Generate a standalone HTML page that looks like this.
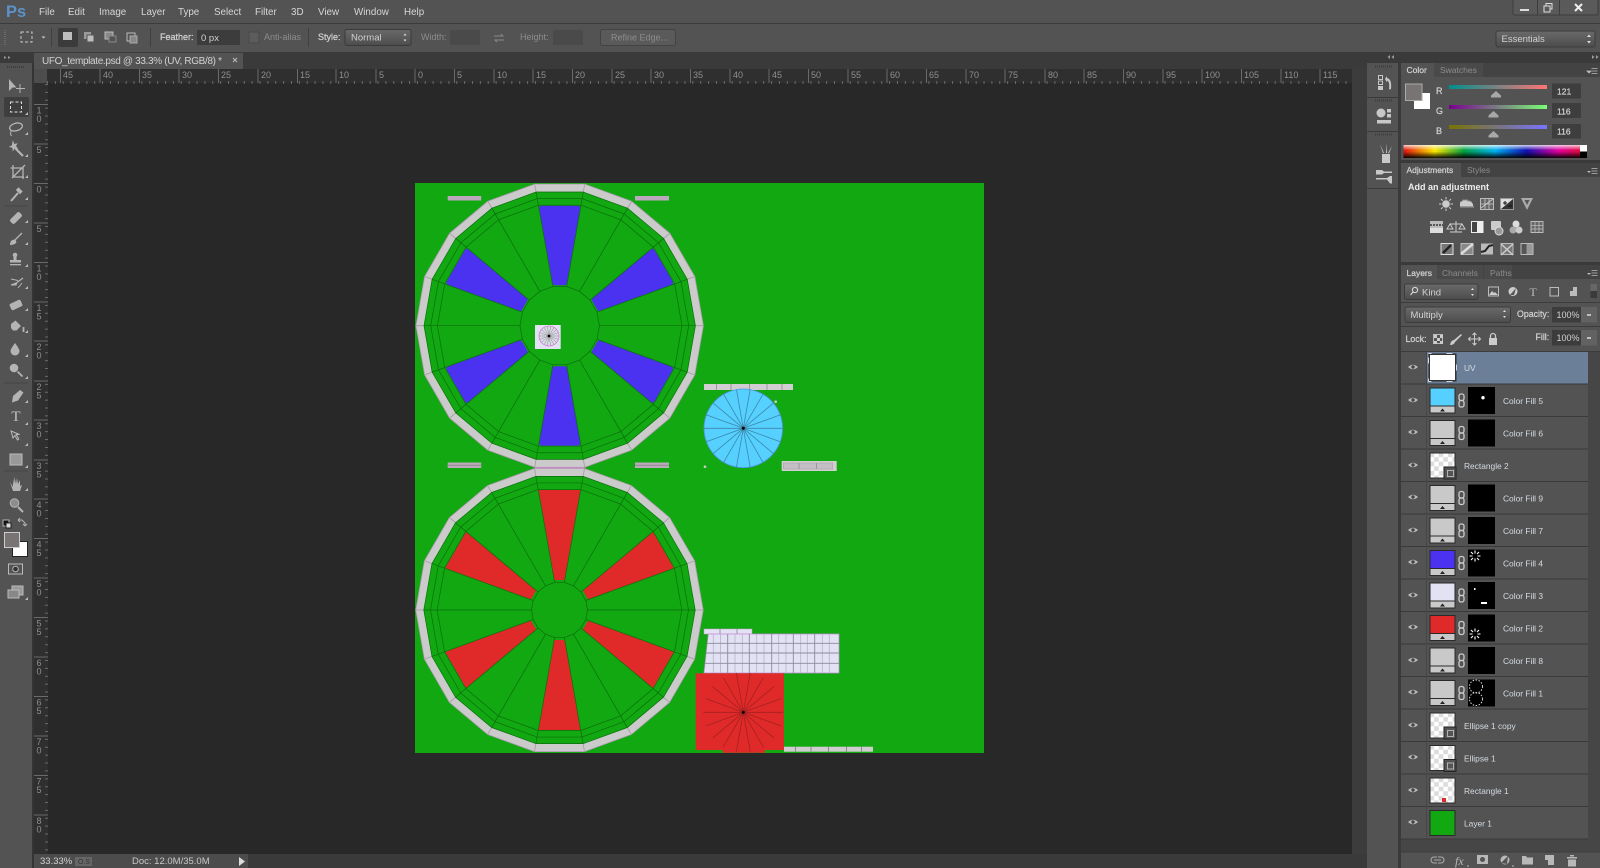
<!DOCTYPE html>
<html><head><meta charset="utf-8"><title>Photoshop</title>
<style>
html,body{margin:0;padding:0;background:#535353;width:1600px;height:868px;overflow:hidden}
svg{display:block;position:absolute;left:0;top:0;filter:blur(.35px)}
text{font-family:"Liberation Sans",sans-serif;font-size:9.5px;fill:#d2d2d2}
.d{fill:#8c8c8c}.b{stroke:#d2d2d2;stroke-width:.22px}.bb{font-weight:bold}
.r text{fill:#8f8f8f;font-size:9px}
.m text{font-size:9.8px;fill:#d6d6d6}
.l text{font-size:8.4px;fill:#d4dbe2}
</style></head><body>
<svg width="1600" height="868" viewBox="0 0 1600 868" xmlns="http://www.w3.org/2000/svg">
<defs>
<polygon id="p" points="174,-985 500,-866 766,-643 940,-342 1000,0 940,342 766,643 500,866 174,985 -174,985 -500,866 -766,643 -940,342 -1000,0 -940,-342 -766,-643 -500,-866 -174,-985"/>
<path id="sp" d="M0 0L174-985M0 0L500-866M0 0L766-643M0 0L940-342M0 0L1000 0M0 0L940 342M0 0L766 643M0 0L500 866M0 0L174 985M0 0L-174 985M0 0L-500 866M0 0L-766 643M0 0L-940 342M0 0L-1000 0M0 0L-940-342M0 0L-766-643M0 0L-500-866M0 0L-174-985"/>
<linearGradient id="gr"><stop offset="0" stop-color="#008f8f"/><stop offset="1" stop-color="#ff7474"/></linearGradient>
<linearGradient id="gg"><stop offset="0" stop-color="#790090"/><stop offset="1" stop-color="#79ff74"/></linearGradient>
<linearGradient id="gb"><stop offset="0" stop-color="#797400"/><stop offset="1" stop-color="#7974ff"/></linearGradient>
<linearGradient id="sx"><stop offset="0" stop-color="#e01010"/><stop offset=".17" stop-color="#ffe800"/><stop offset=".33" stop-color="#00a040"/><stop offset=".5" stop-color="#00b0f0"/><stop offset=".67" stop-color="#1010b0"/><stop offset=".84" stop-color="#e000a0"/><stop offset="1" stop-color="#e01020"/></linearGradient>
<linearGradient id="sy" x2="0" y2="1"><stop offset="0" stop-color="#fff" stop-opacity=".8"/><stop offset=".4" stop-color="#fff" stop-opacity="0"/><stop offset=".5" stop-color="#000" stop-opacity="0"/><stop offset="1" stop-color="#000" stop-opacity=".95"/></linearGradient>
<linearGradient id="bt" x2="0" y2="1"><stop offset="0" stop-color="#6a6a6a"/><stop offset="1" stop-color="#4c4c4c"/></linearGradient>
<pattern id="ck" width="9.2" height="9.2" patternUnits="userSpaceOnUse"><rect width="9.2" height="9.2" fill="#fff"/><rect width="4.6" height="4.6" fill="#dcdcdc"/><rect x="4.6" y="4.6" width="4.6" height="4.6" fill="#dcdcdc"/></pattern>
<g id="tf"><rect width="26" height="26" fill="#2a2a2a"/><rect x="1" y="1" width="24" height="17"/><rect x="1" y="19" width="24" height="6" fill="#c9c9c9"/><path d="M10.5 24h5l-2.500-3z" fill="#222"/></g>
<g id="tc"><rect width="26" height="26" fill="#2a2a2a"/><rect x="1" y="1" width="24" height="24" fill="url(#ck)"/></g>
<g id="ts"><rect x="14.500" y="14.500" width="12" height="12" fill="#535353" stroke="#222"/><rect x="18" y="18" width="6" height="6" fill="none" stroke="#c8c8c8" stroke-width=".8"/><path d="M18 18h.1M24 18h.1M18 24h.1M24 24h.1" stroke="#e8e8e8" stroke-width="2"/></g>
<g id="eye"><path d="M-5 0Q0-4.500 5 0Q0 4.500-5 0Z" fill="#bbb"/><circle r="1.700" fill="#444"/></g>
<g id="lk"><rect x="-2.500" y="-6.500" width="5" height="6.500" rx="2" fill="none" stroke="#ccc" stroke-width="1.300"/><rect x="-2.500" y="0" width="5" height="6.500" rx="2" fill="none" stroke="#ccc" stroke-width="1.300"/></g>
<rect id="mk" width="27" height="27" fill="#000"/>
<g id="st" stroke="#fff" stroke-width="1.100"><path d="M0-2.500v-3M0 2.500v3M-2.500 0h-3M2.500 0h3M-2-2l-2-2M2-2l2-2M-2 2l-2 2M2 2l2 2"/></g>
<path id="cn" d="M0 0h3v-3z" fill="#bbb"/>
<polygon id="bw" points="-18.200,-117.500 18.200,-117.500 5,-43 -5,-43"/>
<polygon id="rw" points="-21,-120 21,-120 5.300,-30 -5.300,-30"/>
</defs>

<!-- base -->
<rect width="1600" height="868" fill="#535353"/>
<rect y="23" width="1600" height="1" fill="#3b3b3b"/>
<rect y="52" width="1600" height="11" fill="#3a3a3a"/>

<!-- canvas area -->
<rect x="32" y="52" width="1335" height="816" fill="#3a3a3a"/>
<rect x="34" y="69" width="1318" height="14" fill="#2f2f2f"/>
<rect x="34" y="83" width="14" height="771" fill="#2f2f2f"/>
<rect x="34" y="69" width="13" height="14" fill="#4d4d4d"/>
<rect x="48" y="83" width="1304" height="771" fill="#282828"/>
<rect x="1352" y="69" width="15" height="785" fill="#3c3c3c"/>
<rect x="34" y="53" width="209" height="16" fill="#535353"/>
<text x="42" y="64" style="font-size:10px" textLength="180">UFO_template.psd @ 33.3% (UV, RGB/8) *</text>
<path d="M233 58l4 4M237 58l-4 4" stroke="#bbb" stroke-width="1"/>

<!-- rulers -->
<g stroke="#6a6a6a" fill="none">
<line x1="47" y1="82.500" x2="1352" y2="82.500" stroke-dasharray="1 6.870" stroke-width="3"/>
<line x1="60.500" y1="69" x2="60.500" y2="83"/><line x1="100" y1="69" x2="100" y2="83"/><line x1="139.500" y1="69" x2="139.500" y2="83"/><line x1="179" y1="69" x2="179" y2="83"/><line x1="218.500" y1="69" x2="218.500" y2="83"/><line x1="258" y1="69" x2="258" y2="83"/><line x1="297.500" y1="69" x2="297.500" y2="83"/><line x1="336" y1="69" x2="336" y2="83"/><line x1="376" y1="69" x2="376" y2="83"/><line x1="415" y1="69" x2="415" y2="83"/><line x1="454.500" y1="69" x2="454.500" y2="83"/><line x1="494" y1="69" x2="494" y2="83"/><line x1="533" y1="69" x2="533" y2="83"/><line x1="572.500" y1="69" x2="572.500" y2="83"/><line x1="612" y1="69" x2="612" y2="83"/><line x1="651" y1="69" x2="651" y2="83"/><line x1="690.500" y1="69" x2="690.500" y2="83"/><line x1="730" y1="69" x2="730" y2="83"/><line x1="769" y1="69" x2="769" y2="83"/><line x1="808.500" y1="69" x2="808.500" y2="83"/><line x1="848" y1="69" x2="848" y2="83"/><line x1="887" y1="69" x2="887" y2="83"/><line x1="926.500" y1="69" x2="926.500" y2="83"/><line x1="966" y1="69" x2="966" y2="83"/><line x1="1005" y1="69" x2="1005" y2="83"/><line x1="1045" y1="69" x2="1045" y2="83"/><line x1="1084" y1="69" x2="1084" y2="83"/><line x1="1123.500" y1="69" x2="1123.500" y2="83"/><line x1="1163" y1="69" x2="1163" y2="83"/><line x1="1202" y1="69" x2="1202" y2="83"/><line x1="1241.500" y1="69" x2="1241.500" y2="83"/><line x1="1281" y1="69" x2="1281" y2="83"/><line x1="1320" y1="69" x2="1320" y2="83"/>
<line x1="46.500" y1="84" x2="46.500" y2="854" stroke-dasharray="1 6.890" stroke-width="3"/>
<path d="M34 104.500h14M34 144h14M34 183.500h14M34 223h14M34 262.500h14M34 302h14M34 341h14M34 381h14M34 420h14M34 460h14M34 499h14M34 538.500h14M34 578h14M34 617.500h14M34 657h14M34 696.500h14M34 736h14M34 775.500h14M34 815h14"/>
</g>
<g class="r">
<text x="63" y="78">45</text><text x="103" y="78">40</text><text x="142" y="78">35</text><text x="182" y="78">30</text><text x="221" y="78">25</text><text x="261" y="78">20</text><text x="300" y="78">15</text><text x="339" y="78">10</text><text x="379" y="78">5</text><text x="418" y="78">0</text><text x="457" y="78">5</text><text x="497" y="78">10</text><text x="536" y="78">15</text><text x="575" y="78">20</text><text x="615" y="78">25</text><text x="654" y="78">30</text><text x="693" y="78">35</text><text x="733" y="78">40</text><text x="772" y="78">45</text><text x="811" y="78">50</text><text x="851" y="78">55</text><text x="890" y="78">60</text><text x="929" y="78">65</text><text x="969" y="78">70</text><text x="1008" y="78">75</text><text x="1048" y="78">80</text><text x="1087" y="78">85</text><text x="1126" y="78">90</text><text x="1166" y="78">95</text><text x="1205" y="78">100</text><text x="1244" y="78">105</text><text x="1284" y="78">110</text><text x="1323" y="78">115</text>
</g>
<g class="r" text-anchor="middle">
<text x="39" y="113.500">1</text><text x="39" y="122">0</text>
<text x="39" y="153">5</text>
<text x="39" y="192.500">0</text>
<text x="39" y="232">5</text>
<text x="39" y="271.500">1</text><text x="39" y="280">0</text>
<text x="39" y="311">1</text><text x="39" y="319.500">5</text>
<text x="39" y="350">2</text><text x="39" y="358.500">0</text>
<text x="39" y="390">2</text><text x="39" y="398.500">5</text>
<text x="39" y="429">3</text><text x="39" y="437.500">0</text>
<text x="39" y="469">3</text><text x="39" y="477.500">5</text>
<text x="39" y="508">4</text><text x="39" y="516.500">0</text>
<text x="39" y="547.500">4</text><text x="39" y="556">5</text>
<text x="39" y="587">5</text><text x="39" y="595.500">0</text>
<text x="39" y="626.500">5</text><text x="39" y="635">5</text>
<text x="39" y="666">6</text><text x="39" y="674.500">0</text>
<text x="39" y="705.500">6</text><text x="39" y="714">5</text>
<text x="39" y="745">7</text><text x="39" y="753.500">0</text>
<text x="39" y="784.500">7</text><text x="39" y="793">5</text>
<text x="39" y="824">8</text><text x="39" y="832.500">0</text>
</g>

<!-- status bar -->
<rect x="34" y="854" width="214" height="14" fill="#4c4c4c"/>
<text x="40" y="864">33.33%</text>
<rect x="75" y="857" width="17" height="9" fill="#666"/><text x="78" y="864" style="font-size:7px;fill:#333">O.S</text>
<text x="132" y="864" style="fill:#c8c8c8">Doc: 12.0M/35.0M</text>
<path d="M239 857l6 4.500-6 4.500z" fill="#ddd"/>

<!-- document -->
<rect x="415" y="183" width="569" height="570" fill="#11a811"/>

<!-- wheel 2 -->
<g transform="translate(559.500,610)">
<use href="#p" transform="scale(.1437)" fill="#cbcbcb" stroke="#b69ab6" stroke-width="5.600"/>
<use href="#sp" transform="scale(.1437)" fill="none" stroke="#a59aa5" stroke-width="5.600"/>
<use href="#p" transform="scale(.1357)" fill="#11a811" stroke="#0c6e0c" stroke-width="5.200"/>
<g fill="#e02a2a"><use href="#rw"/><use href="#rw" transform="rotate(60)"/><use href="#rw" transform="rotate(120)"/><use href="#rw" transform="rotate(180)"/><use href="#rw" transform="rotate(240)"/><use href="#rw" transform="rotate(300)"/></g>
<use href="#p" transform="scale(.129)" fill="none" stroke="#0c6e0c" stroke-width="5.400"/>
<use href="#p" transform="scale(.1223)" fill="none" stroke="#0c6e0c" stroke-width="5.700"/>
<use href="#sp" transform="scale(.1357)" fill="none" stroke="#0c6e0c" stroke-width="5.200"/>
<use href="#p" transform="scale(.028)" fill="#11a811" stroke="#0c6e0c" stroke-width="25"/>
</g>
<!-- wheel 1 -->
<g transform="translate(559.700,325.700)">
<use href="#p" transform="scale(.1437)" fill="#cbcbcb" stroke="#b69ab6" stroke-width="5.600"/>
<use href="#sp" transform="scale(.1437)" fill="none" stroke="#a59aa5" stroke-width="5.600"/>
<use href="#p" transform="scale(.1357)" fill="#11a811" stroke="#0c6e0c" stroke-width="5.200"/>
<g fill="#4b32f0" stroke="#4b32f0" stroke-width="5" stroke-linejoin="round"><use href="#bw"/><use href="#bw" transform="rotate(60)"/><use href="#bw" transform="rotate(120)"/><use href="#bw" transform="rotate(180)"/><use href="#bw" transform="rotate(240)"/><use href="#bw" transform="rotate(300)"/></g>
<use href="#p" transform="scale(.129)" fill="none" stroke="#0c6e0c" stroke-width="5.400"/>
<use href="#p" transform="scale(.1223)" fill="none" stroke="#0c6e0c" stroke-width="5.700"/>
<use href="#sp" transform="scale(.1357)" fill="none" stroke="#0c6e0c" stroke-width="5.200"/>
<use href="#p" transform="scale(.0397)" fill="#11a811" stroke="#0c6e0c" stroke-width="17.500"/>
</g>
<rect x="535" y="325" width="25.700" height="24" fill="#e2e2f4"/>
<g transform="translate(549,336)"><circle r="10" fill="#dcdce8" stroke="#d77fd7" stroke-width=".8"/><use href="#sp" transform="scale(.0098)" fill="none" stroke="#6e6e6e" stroke-width="40"/><circle r="1.300" fill="#000"/></g>
<!-- top bars -->
<g fill="#bda9bd"><rect x="447.700" y="196" width="33.500" height="4.500"/><rect x="635" y="196" width="34" height="4.500"/><rect x="447.700" y="462.500" width="33.500" height="5.500"/><rect x="635" y="462.500" width="34" height="5.500"/></g>
<path d="M447.700 465.200h33.500M635 465.200h34" stroke="#8e8e8e"/>
<rect x="535" y="467" width="50" height="1" fill="#c68cc6"/>

<!-- cyan -->
<rect x="704" y="384" width="89" height="6" fill="#d2cdd2"/>
<path d="M716.500 384v6M731 384v6M749.500 384v6M767 384v6M782 384v6" stroke="#999"/>
<g transform="translate(743.300,428.300)"><circle r="39.300" fill="#55d0ff" stroke="#5590e8" stroke-width=".8"/><use href="#sp" transform="scale(.0393)" fill="none" stroke="#3d86a8" stroke-width="20"/><circle r="1.500" fill="#000"/></g>
<rect x="781.700" y="461" width="55" height="10" fill="#d2cdd2"/><rect x="783.500" y="463" width="49" height="6" fill="#c4bfc4" stroke="#a89ca8" stroke-width=".6"/>
<path d="M799 463v6M816.500 463v6" stroke="#999"/>
<circle cx="775.700" cy="401.700" r="1.300" fill="#ccc"/><circle cx="705" cy="466.700" r="1.300" fill="#ccc"/>

<!-- grid -->
<rect x="704" y="629" width="48" height="5" fill="#e2e2f4" stroke="#c99ac9" stroke-width=".5"/>
<path d="M720 629v5M737 629v5" stroke="#999"/>
<polygon points="708.300,634 839,634 839,673 704,673" fill="#e2e2f4" stroke="#c58ad8" stroke-width=".7"/>
<path d="M713.300 634v39M720.600 634v39M735 634v39M742.300 634v39M756.700 634v39M764 634v39M778.700 634v39M786 634v39M800.700 634v39M807.300 634v39M822.300 634v39M829.300 634v39" stroke="#b4b4c4" stroke-width=".8"/>
<path d="M727.700 634v39M749.300 634v39M771.700 634v39M793.300 634v39M814.700 634v39M705 663.300h134M706 653h133M707 643.300h132" stroke="#8a8a9c" stroke-width=".9"/>

<!-- red -->
<rect x="695.700" y="673.300" width="88.300" height="76.700" fill="#e02a2a"/>
<rect x="722.700" y="750" width="42.300" height="2.800" fill="#e02a2a"/>
<g transform="translate(743.300,712.300)"><use href="#sp" transform="scale(.04)" fill="none" stroke="#a32020" stroke-width="20"/><circle r="1.400" fill="#000"/></g>
<rect x="784" y="746.700" width="89" height="5" fill="#d0cdd0"/>
<path d="M795.500 746.700v5M811 746.700v5M828.500 746.700v5M846.500 746.700v5M861.500 746.700v5" stroke="#8a8a8a"/>

<!-- menu bar -->
<text x="6" y="17" style="font-size:16.500px;font-weight:bold;fill:#5b92c8">Ps</text>
<g class="m">
<text x="39" y="15">File</text><text x="68" y="15">Edit</text><text x="99" y="15">Image</text><text x="141" y="15">Layer</text><text x="178" y="15">Type</text><text x="214" y="15">Select</text><text x="255" y="15">Filter</text><text x="291" y="15">3D</text><text x="318" y="15">View</text><text x="354" y="15">Window</text><text x="404" y="15">Help</text>
</g>
<!-- window controls -->
<rect x="1513" y="-2" width="85" height="17" rx="2" fill="#5a5a5a" stroke="#3c3c3c"/>
<path d="M1537.500 0v15M1559.500 0v15" stroke="#3c3c3c"/>
<rect x="1520" y="9" width="9" height="2" fill="#ddd"/>
<path d="M1544 6h6v6h-6zM1546 6V3.500h6V9h-2" fill="none" stroke="#ddd"/>
<path d="M1575 4l7 7M1582 4l-7 7" stroke="#eee" stroke-width="2"/>

<!-- options bar -->
<path d="M5 30v16" stroke="#6a6a6a" stroke-dasharray="1 1" stroke-width="2"/>
<rect x="21" y="32" width="11" height="10" fill="none" stroke="#c8c8c8" stroke-dasharray="3 2"/>
<path d="M41.500 36.500h4l-2 2z" fill="#ccc"/>
<path d="M51.500 28v19M150.500 28v19M308.500 28v19" stroke="#404040"/>
<rect x="58" y="28" width="20" height="19" rx="2" fill="#3b3b3b"/>
<rect x="63" y="32" width="9" height="8" fill="#bdbdbd"/>
<rect x="84" y="32" width="7" height="7" fill="#9a9a9a"/><rect x="87" y="35" width="7" height="7" fill="#bdbdbd" stroke="#555"/>
<rect x="105" y="32" width="8" height="7" fill="#888" stroke="#bbb"/><rect x="109" y="36" width="7" height="6" fill="#535353" stroke="#888"/>
<rect x="127" y="33" width="8" height="8" fill="none" stroke="#bbb"/><rect x="130" y="36" width="7" height="7" fill="#888" stroke="#aaa"/>
<text x="160" y="40" class="b" style="font-size:9px">Feather:</text>
<rect x="197" y="30" width="43" height="15" fill="#3c3c3c"/><text x="201" y="41" style="font-size:9.500px">0 px</text>
<rect x="249" y="32" width="10" height="11" rx="1" fill="#5c5c5c" stroke="#484848"/>
<text x="264" y="40" class="d" style="font-size:9px">Anti-alias</text>
<text x="318" y="40" class="b" style="font-size:9px">Style:</text>
<rect x="345" y="29.500" width="66" height="16" rx="2" fill="url(#bt)" stroke="#3a3a3a"/><text x="351" y="40.500" style="font-size:9.500px">Normal</text>
<path d="M403.500 35.500l1.500-2 1.500 2zM403.500 39.500l1.500 2 1.500-2z" fill="#ddd"/>
<text x="421" y="40" class="d" style="font-size:9px">Width:</text>
<rect x="450" y="30" width="30" height="15" fill="#4a4a4a"/>
<path d="M494 36h9l-2-2M504 40h-9l2 2" fill="none" stroke="#888"/>
<text x="520" y="40" class="d" style="font-size:9px">Height:</text>
<rect x="553" y="30" width="30" height="15" fill="#4a4a4a"/>
<rect x="600.500" y="29.500" width="75" height="16" rx="2" fill="#5a5a5a" stroke="#434343"/><text x="611" y="40.500" class="d" style="font-size:9px">Refine Edge...</text>
<rect x="1496" y="31" width="99" height="16" rx="2" fill="url(#bt)" stroke="#3c3c3c"/><text x="1501.500" y="42">Essentials</text>
<path d="M1587 37l2-2.500 2 2.500zM1587 41l2 2.500 2-2.500z" fill="#ddd"/>

<!-- left toolbar -->
<rect x="0" y="52" width="32" height="11" fill="#3a3a3a"/>
<path d="M4 56l2.500 1.500L4 59zM8 56l2.500 1.500L8 59z" fill="#9a9a9a"/>
<rect x="0" y="63" width="32" height="805" fill="#535353"/>
<rect x="32" y="63" width="2" height="805" fill="#343434"/>
<path d="M7 67h18" stroke="#3e3e3e" stroke-width="2" stroke-dasharray="1 1"/>
<rect x="4" y="97" width="25" height="20" rx="2" fill="#3e3e3e"/>
<g fill="#b4b4b4" stroke="#b4b4b4" stroke-width="1">
<path d="M9 79v12l3-3 .5-.5h4z" stroke="none"/>
<path d="M20 84v9M16 88.500h9" fill="none"/>
<rect x="10.500" y="102" width="11" height="10" fill="none" stroke-dasharray="3 2" stroke="#ddd"/>
<ellipse cx="16" cy="127" rx="6.500" ry="3.800" transform="rotate(-15 16 127)" fill="none" stroke-width="1.300"/><path d="M11 131l-.5 3 1 2" fill="none"/>
<path d="M15 148l8 8" stroke-width="2.200"/><path d="M13 142l1 2.500 2.600-.5-1.300 2.200 1.700 1.800-2.600-.5-1.300 2.400-.4-2.600-2.600-.5 2.300-1.300z"/>
<path d="M13 165v12h11M10.500 168H23v11M25 165l-13 13" fill="none" stroke-width="1.300"/>
<path d="M11 201l7-8" stroke-width="2"/><path d="M18.500 188l3.500 3.500-2 2-3.500-3.500z"/>
<rect x="-6.500" y="-3" width="13" height="6" rx="2" transform="translate(16,218) rotate(-45)" stroke="none"/>
<path d="M22 233l-7 7" stroke-width="1.300"/><path d="M10 245q0-5.500 5-5.500 2 2 1 3.500-2 2-6 2z" stroke="none"/>
<circle cx="15" cy="255" r="2.300" stroke="none"/><rect x="13.500" y="257" width="3" height="4" stroke="none"/><rect x="10" y="260" width="11" height="2.500" stroke="none"/><rect x="10" y="264" width="11" height="1.300" stroke="none"/>
<path d="M23 278l-6 4.500" stroke-width="1.300"/><path d="M11 285l6-2.500-1 2.500z"/><path d="M11 279l7 1.500M18 288l4-5" fill="none"/>
<rect x="-6" y="-3.500" width="12" height="7" rx="1.500" transform="translate(16,305) rotate(-25)" stroke="none"/>
<path d="M11 324l4.500-3.500 5.500 5.500-4.500 4.500h-3.500l-2-2.500z" stroke="none"/><path d="M23.500 327v5" stroke-width="1.800"/>
<path d="M15 343q4.500 6 4.500 8a4.500 4.500 0 0 1-9 0q0-2 4.500-8z" stroke="none"/>
<circle cx="14" cy="368" r="4.300" stroke="none"/><path d="M17.500 371.500l5 5" stroke-width="1.800"/>
<path d="M20 390l3.500 2.500-5.500 8-6 2 1-6.500z" stroke="none"/>
<path d="M11 431l2 7 1.800-2.500 2.700 4.500 1.300-1-2.700-4.500h3.400z" fill="#535353" stroke="#bbb"/>
<rect x="10" y="454" width="12" height="11" fill="#999" stroke="#bbb"/>
<path d="M10 482l3 5v-8l1 5 .5-7 1.500 7 1-6 1 6 2-4v6l2-1-2 6h-7z" stroke="none"/>
<circle cx="14.500" cy="503" r="4.300" fill="#8d8d8d"/><path d="M18 507l5 5" stroke-width="2"/>
<rect x="3" y="520" width="6" height="6" fill="#111"/><rect x="6" y="523" width="5" height="5" fill="#ddd" stroke="#222"/>
<path d="M18 520h4l3 3v3M18 520l2-2M18 520l2 2M25 526l-2-2M25 526l2-2" fill="none"/>
<rect x="12.500" y="541.500" width="15" height="15" fill="#fff" stroke="#222"/>
<rect x="4.500" y="532.500" width="15" height="15" fill="#797474" stroke="#ccc"/>
<rect x="8.500" y="564" width="14" height="10" fill="none" stroke="#bbb"/><circle cx="15.500" cy="569" r="2.800" fill="#333"/>
<rect x="12" y="586" width="11" height="9" fill="#999" stroke="#bbb"/><rect x="8" y="590" width="11" height="8" fill="#888" stroke="#bbb"/>
</g>
<text x="16" y="421" text-anchor="middle" style="font-family:'Liberation Serif',serif;font-size:15px;fill:#c4c4c4">T</text>
<path d="M4 206h24M4 383h24M4 471h24" stroke="#444"/>
<g fill="#bbb">
<use href="#cn" x="25" y="115"/><use href="#cn" x="25" y="135"/><use href="#cn" x="25" y="157"/><use href="#cn" x="25" y="178"/><use href="#cn" x="25" y="200"/><use href="#cn" x="25" y="223"/><use href="#cn" x="25" y="245"/><use href="#cn" x="25" y="267"/><use href="#cn" x="25" y="289"/><use href="#cn" x="25" y="311"/><use href="#cn" x="25" y="333"/><use href="#cn" x="25" y="357"/><use href="#cn" x="25" y="379"/><use href="#cn" x="25" y="403"/><use href="#cn" x="25" y="425"/><use href="#cn" x="25" y="446"/><use href="#cn" x="25" y="468"/><use href="#cn" x="25" y="491"/><use href="#cn" x="25" y="600"/>
</g>

<!-- dock -->
<rect x="1367" y="63" width="31" height="805" fill="#535353"/>
<path d="M1367 97.500h31M1367 131.500h31M1367 188.500h31" stroke="#3a3a3a"/>
<path d="M1375 66.500h17M1375 100.500h17M1375 134.500h17" stroke="#3e3e3e" stroke-width="2" stroke-dasharray="1 1"/>
<path d="M1394 55l-2.500 2 2.500 2zM1390 55l-2.500 2 2.500 2z" fill="#9a9a9a"/>
<g fill="#c8c8c8">
<rect x="1378.500" y="75.500" width="4" height="4" fill="none" stroke="#c8c8c8"/><rect x="1378.500" y="81" width="4" height="3.500" fill="none" stroke="#c8c8c8"/><rect x="1378" y="86" width="5" height="4"/>
<path d="M1385 79l2-3v2q5 1 4 11l-2 .5q1-8-2-9v2z"/>
<circle cx="1381" cy="113" r="4.500"/><rect x="1387" y="109" width="4" height="3.500"/><rect x="1387" y="114" width="4" height="3.500"/><rect x="1377" y="120" width="14" height="3.500"/>
<path d="M1382 154h8v9h-8zM1380 144l3 9h1zM1386 143v10h1zM1392 146l-4 7 1 .5z"/>
<path d="M1376 170h6l2 1.500h8v1.500h-8l-2 1.500h-6zM1392 176h-2l-3 2h-11v1.500h11l3 4h2z"/>
</g>

<!-- right panels -->
<path d="M1596 55l2.500 2-2.500 2zM1592 55l2.500 2-2.500 2z" fill="#9a9a9a"/>
<rect x="1398" y="63" width="3" height="805" fill="#3a3a3a"/>
<!-- color panel -->
<rect x="1401" y="63" width="199" height="14" fill="#434343"/>
<rect x="1401" y="63" width="33" height="14" fill="#535353"/>
<rect x="1434" y="63" width="49" height="14" fill="#4a4a4a"/>
<text x="1406.500" y="73" class="b" style="font-size:8.500px">Color</text><text x="1440" y="73" class="d" style="font-size:8.500px">Swatches</text>
<path d="M1587 71h4l-2 2zM1591.500 68.500h6M1591.500 71h6M1591.500 73.500h6" stroke="#bbb" fill="#bbb" stroke-width=".8"/>
<rect x="1414" y="93" width="16" height="16" fill="#fff"/>
<rect x="1405.500" y="84" width="16.500" height="16.500" fill="#797474" stroke="#aaa"/>
<text x="1436" y="94" style="font-size:9px" class="b">R</text><text x="1436" y="114" style="font-size:9px" class="b">G</text><text x="1436" y="134" style="font-size:9px" class="b">B</text>
<rect x="1449" y="85" width="98" height="4" fill="url(#gr)"/><rect x="1449" y="105" width="98" height="4" fill="url(#gg)"/><rect x="1449" y="125" width="98" height="4" fill="url(#gb)"/>
<path d="M1491 97.500v-2l5-4.500 5 4.500v2zM1488.500 117.500v-2l5-4.500 5 4.500v2zM1488.500 137.500v-2l5-4.500 5 4.500v2z" fill="#a8a8a8"/>
<rect x="1552" y="83.500" width="29" height="15" fill="#3e3e3e"/><rect x="1552" y="103" width="29" height="15" fill="#3e3e3e"/><rect x="1552" y="124" width="29" height="14.500" fill="#3e3e3e"/>
<text x="1557" y="94.500" class="b" style="font-size:8.500px">121</text><text x="1557" y="114.500" class="b" style="font-size:8.500px">116</text><text x="1557" y="134.500" class="b" style="font-size:8.500px">116</text>
<rect x="1403.500" y="145" width="183.500" height="13" fill="url(#sx)"/>
<rect x="1403.500" y="145" width="183.500" height="13" fill="url(#sy)"/>
<rect x="1580" y="145" width="7" height="6.500" fill="#fff"/><rect x="1580" y="151.500" width="7" height="6.500" fill="#000"/>

<!-- adjustments -->
<rect x="1401" y="160" width="199" height="3" fill="#3a3a3a"/>
<rect x="1401" y="163" width="199" height="14" fill="#434343"/>
<rect x="1401" y="163" width="60" height="14" fill="#535353"/>
<text x="1406.500" y="173" class="b" style="font-size:8.500px">Adjustments</text><text x="1467" y="173" class="d" style="font-size:8.500px">Styles</text>
<path d="M1591.500 168.500h6M1591.500 171h6M1591.500 173.500h6" stroke="#bbb" stroke-width=".8"/><path d="M1587 171h4l-2 2z" fill="#bbb"/>
<text x="1408" y="190" class="bb" style="font-size:9px;fill:#eee">Add an adjustment</text>
<g>
<circle cx="1446" cy="204" r="3.800" fill="#ccc"/><path d="M1446 197v2.500M1446 208.500v2.500M1439 204h2.500M1450.500 204h2.500M1441 199l1.800 1.800M1449.200 207.200l1.800 1.800M1451 199l-1.800 1.800M1442.800 207.200l-1.800 1.800" stroke="#ccc"/>
<path d="M1460 206v-3l1-2 1 1 1-3 1 2 1-2 1 2 1-2 1 3 1-2 1 2 1-1 1 2 1 1v2z" fill="#ccc"/><rect x="1460" y="206" width="14" height="1.500" fill="#999"/>
<rect x="1480.500" y="198.500" width="13" height="11" fill="#666" stroke="#bbb"/><path d="M1481 208l12-9M1485 199v10M1489 199v10M1481 204h12" stroke="#ccc" stroke-width=".8"/>
<rect x="1500.500" y="198.500" width="13" height="11" fill="#ddd" stroke="#999"/><path d="M1501 209l12-10v10z" fill="#333"/><path d="M1503 203h4M1505 201v4M1508 206h4" stroke="#111"/>
<path d="M1521 198h12l-6 12z" fill="#aaa"/><path d="M1524.500 200h5l-2.500 5z" fill="#555"/>
<rect x="1430" y="221" width="13" height="12" fill="#bbb"/><path d="M1430 225h13" stroke="#555" stroke-width="2" stroke-dasharray="2 1"/><rect x="1430" y="228" width="13" height="5" fill="#ddd"/>
<path d="M1456 221v11M1450 232h12M1450 224h12M1450 224l-3 5h6zM1462 224l-3 5h6z" fill="none" stroke="#ccc"/>
<rect x="1471" y="221" width="12.500" height="12" fill="#eee"/><rect x="1472" y="222" width="5" height="10" fill="#444"/>
<rect x="1491" y="221" width="10" height="9" rx="1" fill="#ccc"/><circle cx="1499" cy="231" r="4" fill="#999" stroke="#ddd"/>
<circle cx="1516" cy="224" r="3.500" fill="#ddd"/><circle cx="1513" cy="230" r="3.500" fill="#aaa"/><circle cx="1519" cy="230" r="3.500" fill="#ccc"/>
<rect x="1531" y="221.500" width="12" height="11" fill="#666" stroke="#bbb"/><path d="M1535 222v11M1539 222v11M1531 225.500h12M1531 229h12" stroke="#bbb" stroke-width=".8"/>
<rect x="1441" y="243.500" width="12" height="11" fill="#777" stroke="#ddd"/><path d="M1443 253l8-8" stroke="#222" stroke-width="2.500"/>
<rect x="1461" y="243.500" width="12" height="11" fill="#888" stroke="#bbb"/><path d="M1461 254l12-10" stroke="#ddd" stroke-width="2.500"/>
<rect x="1481" y="243.500" width="12" height="11" fill="#bbb"/><path d="M1481 252l4-1 4-5 4-1" stroke="#222" stroke-width="2" fill="none"/>
<rect x="1501" y="243.500" width="12" height="11" fill="#777" stroke="#bbb"/><path d="M1501 244l12 11M1513 244l-12 11" stroke="#ccc" stroke-width="1.500"/>
<rect x="1521" y="243.500" width="12" height="11" fill="#999" stroke="#bbb"/><rect x="1521.500" y="244" width="5" height="10" fill="#555"/>
</g>

<!-- layers -->
<rect x="1401" y="262" width="199" height="3" fill="#3a3a3a"/>
<rect x="1401" y="265" width="199" height="14" fill="#434343"/>
<rect x="1401" y="265" width="36" height="14" fill="#535353"/>
<rect x="1437" y="265" width="46" height="14" fill="#4a4a4a"/><rect x="1484" y="265" width="28" height="14" fill="#4a4a4a"/>
<text x="1406.500" y="276" class="b" style="font-size:8.500px">Layers</text><text x="1442" y="276" class="d" style="font-size:8.500px">Channels</text><text x="1490" y="276" class="d" style="font-size:8.500px">Paths</text>
<path d="M1591.500 270.500h6M1591.500 273h6M1591.500 275.500h6" stroke="#bbb" stroke-width=".8"/><path d="M1587 273h4l-2 2z" fill="#bbb"/>
<rect x="1404.500" y="284" width="73.500" height="15.500" rx="2" fill="url(#bt)" stroke="#3c3c3c"/>
<circle cx="1415" cy="290" r="2.600" fill="none" stroke="#ddd"/><path d="M1413 292l-2.500 3" stroke="#ddd"/>
<text x="1422" y="295.500">Kind</text>
<path d="M1471 290l1.500-2 1.500 2zM1471 294l1.500 2 1.500-2z" fill="#ddd"/>
<rect x="1488.500" y="287" width="10" height="9" fill="#555" stroke="#bbb"/><path d="M1489 295l3-4 2 2 1-1 3 3z" fill="#ccc"/>
<circle cx="1513" cy="291.500" r="4.500" fill="#ccc"/><path d="M1510 295l6-7-2 7z" fill="#555"/>
<text x="1533" y="296" text-anchor="middle" style="font-family:'Liberation Serif',serif;font-size:12px;fill:#bbb">T</text>
<rect x="1550" y="287.500" width="8.500" height="8.500" fill="none" stroke="#bbb"/><path d="M1550 287.500h.1M1558.500 287.500h.1M1550 296h.1M1558.500 296h.1" stroke="#ddd" stroke-width="2.500"/>
<path d="M1570 291h3v-4h4v9h-7z" fill="#bbb"/>
<rect x="1590.500" y="284" width="6.500" height="7" fill="#666"/><rect x="1590.500" y="291" width="6.500" height="7" fill="#3a3a3a"/>
<path d="M1401 302.500h199M1401 326.500h199M1401 351.500h199" stroke="#3c3c3c"/>
<rect x="1405" y="307" width="105.500" height="15.500" rx="2" fill="url(#bt)" stroke="#3c3c3c"/>
<text x="1410.500" y="318" style="font-size:9.500px">Multiply</text>
<path d="M1503 312l1.500-2 1.500 2zM1503 316l1.500 2 1.500-2z" fill="#ddd"/>
<text x="1517" y="317" class="b" style="font-size:8.800px">Opacity:</text>
<rect x="1552" y="307" width="29" height="15.500" fill="#3c3c3c"/><text x="1556.500" y="318" style="font-size:9px">100%</text>
<rect x="1581" y="307" width="16" height="15.500" fill="#626262"/><path d="M1587 315h4" stroke="#ddd" stroke-width="1.500"/>
<text x="1405.500" y="342" class="b" style="font-size:8.800px">Lock:</text>
<rect x="1433.500" y="334.500" width="9" height="9" fill="#555" stroke="#bbb"/><path d="M1434 335h3v3h-3zM1440 335h3v3h-3zM1437 338h3v3h-3zM1434 341h3v3h-3zM1440 341h3v3h-3z" fill="#ccc"/>
<path d="M1450 345q4 0 5-3l7-7-1-1-7 6q-3 0-4 5z" fill="#ccc"/>
<path d="M1474.500 333v12M1468.500 339h12M1472.500 335l2-2 2 2M1472.500 343l2 2 2-2M1470.500 337l-2 2 2 2M1478.500 337l2 2-2 2" fill="none" stroke="#ccc"/>
<rect x="1489" y="338" width="8" height="7" fill="#ccc"/><path d="M1490.500 338v-2a2.500 2.500 0 0 1 5 0v2" fill="none" stroke="#ccc" stroke-width="1.300"/>
<text x="1535.500" y="340" class="b" style="font-size:8.800px">Fill:</text>
<rect x="1552" y="330" width="29" height="15.500" fill="#3c3c3c"/><text x="1556.500" y="341" style="font-size:9px">100%</text>
<rect x="1581" y="330" width="16" height="15.500" fill="#626262"/><path d="M1587 338h4" stroke="#ddd" stroke-width="1.500"/>

<rect x="1588" y="352" width="12" height="500" fill="#464646"/>
<rect x="1401" y="839" width="187" height="13" fill="#464646"/>
<rect x="1426" y="352" width="162" height="32" fill="#6b7f99"/>
<g stroke="#3a3a3a"><path d="M1401 384h187M1401 416.500h187M1401 449h187M1401 481.500h187M1401 514h187M1401 546.500h187M1401 579h187M1401 611.500h187M1401 644h187M1401 676.500h187M1401 709h187M1401 741.500h187M1401 774h187M1401 806.500h187M1401 839h187"/><path d="M1426.500 352v487" stroke="#474747"/></g>
<g>
<use href="#eye" x="1413" y="367"/><use href="#eye" x="1413" y="400"/><use href="#eye" x="1413" y="432"/><use href="#eye" x="1413" y="465"/><use href="#eye" x="1413" y="497"/><use href="#eye" x="1413" y="530"/><use href="#eye" x="1413" y="562"/><use href="#eye" x="1413" y="595"/><use href="#eye" x="1413" y="627"/><use href="#eye" x="1413" y="660"/><use href="#eye" x="1413" y="692"/><use href="#eye" x="1413" y="725"/><use href="#eye" x="1413" y="757"/><use href="#eye" x="1413" y="790"/><use href="#eye" x="1413" y="822"/>
<!-- UV thumb -->
<rect x="1428.500" y="353.500" width="28" height="28" fill="#333" stroke="#cfd8e4" stroke-dasharray="6 15" stroke-dashoffset="3"/>
<rect x="1430" y="355" width="25" height="25" fill="#fff"/>
<use href="#tf" x="1429.500" y="387.500" fill="#55d0ff"/><use href="#tf" x="1429.500" y="420" fill="#c9c9c9"/>
<use href="#tc" x="1429.500" y="452.500"/><use href="#ts" x="1429.500" y="452.500"/>
<use href="#tf" x="1429.500" y="485" fill="#c9c9c9"/><use href="#tf" x="1429.500" y="517.500" fill="#c9c9c9"/><use href="#tf" x="1429.500" y="550" fill="#4b32f0"/><use href="#tf" x="1429.500" y="582.500" fill="#e2e2f4"/><use href="#tf" x="1429.500" y="615" fill="#e02a2a"/><use href="#tf" x="1429.500" y="647.500" fill="#c9c9c9"/><use href="#tf" x="1429.500" y="680" fill="#c9c9c9"/>
<use href="#tc" x="1429.500" y="712.500"/><use href="#ts" x="1429.500" y="712.500"/>
<use href="#tc" x="1429.500" y="745"/><use href="#ts" x="1429.500" y="745"/>
<use href="#tc" x="1429.500" y="777.500"/><rect x="1442" y="798" width="4" height="4" fill="#e02a2a"/>
<rect x="1429.500" y="810" width="26" height="26" fill="#2a2a2a"/><rect x="1430.500" y="811" width="24" height="24" fill="#11a811"/>
<!-- masks -->
<use href="#mk" x="1468" y="387"/><use href="#mk" x="1468" y="419.500"/><use href="#mk" x="1468" y="484.500"/><use href="#mk" x="1468" y="517"/><use href="#mk" x="1468" y="549.500"/><use href="#mk" x="1468" y="582"/><use href="#mk" x="1468" y="614.500"/><use href="#mk" x="1468" y="647"/><use href="#mk" x="1468" y="679.500"/>
<circle cx="1483" cy="397.700" r="1.700" fill="#fff"/>
<g transform="translate(1475,556)"><use href="#st"/></g>
<rect x="1474" y="588" width="1.500" height="2" fill="#fff"/><rect x="1481" y="602" width="6" height="2" fill="#fff"/>
<g transform="translate(1475,634)"><use href="#st"/></g>
<circle cx="1476" cy="686.500" r="6.500" fill="none" stroke="#ddd" stroke-dasharray="1.500 1.500"/><circle cx="1476" cy="699" r="6.500" fill="none" stroke="#ddd" stroke-dasharray="1.500 1.500"/>
<!-- links -->
<use href="#lk" x="1461.500" y="400.500"/><use href="#lk" x="1461.500" y="433"/><use href="#lk" x="1461.500" y="498"/><use href="#lk" x="1461.500" y="530.500"/><use href="#lk" x="1461.500" y="563"/><use href="#lk" x="1461.500" y="595.500"/><use href="#lk" x="1461.500" y="628"/><use href="#lk" x="1461.500" y="660.500"/><use href="#lk" x="1461.500" y="693"/>
</g>
<g class="l">
<text x="1464" y="371">UV</text>
<text x="1503" y="404">Color Fill 5</text>
<text x="1503" y="436.500">Color Fill 6</text>
<text x="1464" y="469">Rectangle 2</text>
<text x="1503" y="501.500">Color Fill 9</text>
<text x="1503" y="534">Color Fill 7</text>
<text x="1503" y="566.500">Color Fill 4</text>
<text x="1503" y="599">Color Fill 3</text>
<text x="1503" y="631.500">Color Fill 2</text>
<text x="1503" y="664">Color Fill 8</text>
<text x="1503" y="696.500">Color Fill 1</text>
<text x="1464" y="729">Ellipse 1 copy</text>
<text x="1464" y="761.500">Ellipse 1</text>
<text x="1464" y="794">Rectangle 1</text>
<text x="1464" y="826.500">Layer 1</text>
</g>
<!-- layers footer -->
<rect x="1401" y="852" width="199" height="16" fill="#535353"/>
<path d="M1401 852h199" stroke="#3c3c3c"/>
<g fill="#b8b8b8">
<path d="M1437 857h-3a3 3 0 0 0 0 6h3M1438 857h3a3 3 0 0 1 0 6h-3M1434 860h7" fill="none" stroke="#aaa" stroke-width="1.100"/>
<text x="1455" y="865" style="font-family:'Liberation Serif',serif;font-style:italic;font-size:12px;fill:#b8b8b8">fx</text><path d="M1467 866h2" stroke="#b8b8b8"/>
<rect x="1477" y="855" width="11" height="9"/><circle cx="1482.500" cy="859.500" r="2.500" fill="#535353"/>
<circle cx="1505" cy="860" r="4.500"/><path d="M1501 863l7-7-1 8z" fill="#535353"/><path d="M1512 866h2" stroke="#b8b8b8"/>
<path d="M1522 856h4l1 1.500h6v7h-11z"/>
<path d="M1545 855h9v10h-6v-5h-3z"/>
<path d="M1567 857h10v1.500h-10zM1570 855h4v1.500h-4zM1568 859.500h8v7h-8z"/>
</g>
</svg>
</body></html>
